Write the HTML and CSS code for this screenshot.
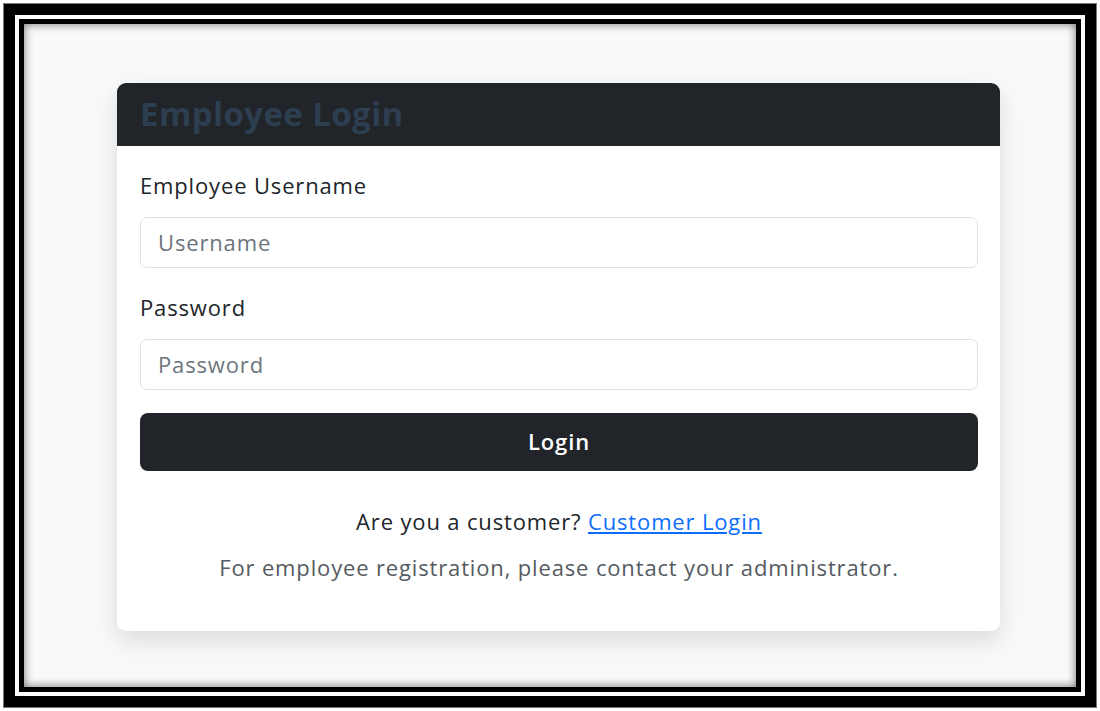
FILE: index.html
```html
<!DOCTYPE html>
<html lang="en">
<head>
<meta charset="utf-8">
<title>Employee Login</title>
<link rel="stylesheet" href="styles.css">
</head>
<body>
<div class="frame">
  <div class="frame-inner">
    <div class="canvas">
      <div class="card">
        <div class="card-header">
          <h2 class="card-title">Employee Login</h2>
        </div>
        <form class="card-body">
          <label class="form-label" for="username">Employee Username</label>
          <input class="form-control" id="username" type="text" placeholder="Username">
          <label class="form-label" for="password">Password</label>
          <input class="form-control" id="password" type="password" placeholder="Password">
          <button class="btn-login" type="button">Login</button>
          <p class="customer-line">Are you a customer? <a href="#" class="link">Customer Login</a></p>
          <p class="note">For employee registration, please contact your administrator.</p>
        </form>
      </div>
    </div>
  </div>
</div>
</body>
</html>
```

FILE: styles.css
```css
* { box-sizing: border-box; }
html, body { margin: 0; padding: 0; background: #fff; }
body {
  width: 1100px;
  height: 711px;
  padding: 3px;
  font-family: "Open Sans", "Liberation Sans", sans-serif;
}
.frame {
  height: 705px;
  border: 12px solid #000;
  outline: 1px solid #777;
  outline-offset: -1px;
  padding: 4px;
  background: #fff;
}
.frame-inner {
  height: 100%;
  border: 5px solid #000;
}
.canvas {
  height: 100%;
  background: #f8f9fa;
  box-shadow: inset 0 0 10px rgba(0,0,0,0.55);
  padding: 59px 0 0 93px;
}
.card {
  width: 883px;
  background: #fff;
  border-radius: 9px;
  box-shadow: 0 10px 24px rgba(0,0,0,0.12);
  overflow: hidden;
}
.card-header {
  background: #212529;
  height: 63px;
  display: flex;
  align-items: center;
  padding: 0 23px 2px;
}
.card-title {
  margin: 0;
  font-size: 33px;
  font-weight: 700;
  letter-spacing: 0.4px;
  color: #2c3e50;
  line-height: 1;
}
.card-body {
  display: flex;
  flex-direction: column;
  padding: 23px 22px 48px 23px;
  font-size: 22px;
  letter-spacing: 0.85px;
}
.form-label {
  line-height: 32px;
  color: #212529;
  margin-bottom: 16px;
}
.form-control {
  height: 51px;
  width: 838px;
  border: 1px solid #dee2e6;
  border-radius: 7px;
  padding: 0 17px 2px;
  font-family: inherit;
  font-size: 22px;
  letter-spacing: 0.85px;
  color: #212529;
  margin-bottom: 23px;
}
.form-control::placeholder { color: #6c757d; }
#password { margin-bottom: 23px; }
.btn-login {
  height: 58px;
  width: 838px;
  background: #212529;
  color: #fff;
  border: none;
  border-radius: 8px;
  padding: 0 0 3px;
  font-family: inherit;
  font-size: 22px;
  letter-spacing: 0.85px;
  font-weight: 600;
}
.customer-line {
  margin: 34px 0 0;
  text-align: center;
  line-height: 32px;
  color: #212529;
}
.link { color: #0d6efd; text-decoration: underline; }
.note {
  margin: 14px 0 0;
  text-align: center;
  line-height: 32px;
  color: #555b61;
}
```
